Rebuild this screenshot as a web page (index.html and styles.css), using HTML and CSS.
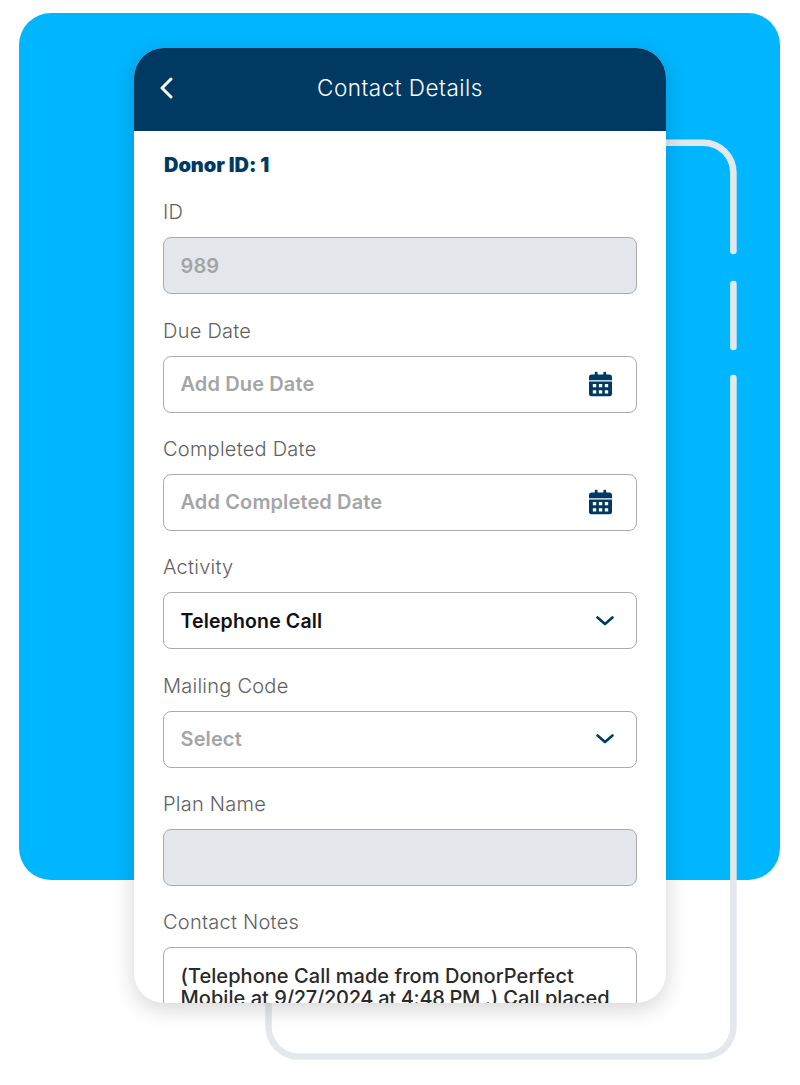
FILE: index.html
```html
<!DOCTYPE html>
<html lang="en">
<head>
<meta charset="utf-8">
<title>Contact Details</title>
<link rel="stylesheet" href="styles.css">
</head>
<body>
<div class="stage">
  <div class="panel"></div>
  <svg class="trace" width="800" height="1085" viewBox="0 0 800 1085" fill="none" aria-hidden="true">
    <path d="M640 142.7H703.4A30 30 0 0 1 733.4 172.7V251"/>
    <path d="M733.4 284V347"/>
    <path d="M733.4 378V1026.5A30 30 0 0 1 703.4 1056.5H298.5A30 30 0 0 1 268.5 1026.5V980"/>
  </svg>
  <main class="phone">
    <header class="bar">
      <svg class="back" width="14" height="22" viewBox="0 0 14 22" fill="none"><path d="M12 2L3 11l9 9"/></svg>
      <h1 class="title">Contact Details</h1>
    </header>
    <section class="form">
      <h2 class="donor">Donor ID: 1</h2>
      <div class="group">
        <label class="label">ID</label>
        <div class="field disabled"><span class="muted">989</span></div>
      </div>
      <div class="group">
        <label class="label">Due Date</label>
        <div class="field"><span class="muted">Add Due Date</span>
          <svg class="cal" width="23" height="26" viewBox="0 0 24 26"><use href="#cal"/></svg>
        </div>
      </div>
      <div class="group">
        <label class="label">Completed Date</label>
        <div class="field"><span class="muted">Add Completed Date</span>
          <svg class="cal" width="23" height="26" viewBox="0 0 24 26"><use href="#cal"/></svg>
        </div>
      </div>
      <div class="group">
        <label class="label">Activity</label>
        <div class="field select"><span class="value">Telephone Call</span>
          <svg class="chev" width="18" height="10" viewBox="0 0 18 10" fill="none"><path d="M1.500 1.500L9 8l7.500-6.500"/></svg>
        </div>
      </div>
      <div class="group">
        <label class="label">Mailing Code</label>
        <div class="field select"><span class="muted">Select</span>
          <svg class="chev" width="18" height="10" viewBox="0 0 18 10" fill="none"><path d="M1.500 1.500L9 8l7.500-6.500"/></svg>
        </div>
      </div>
      <div class="group">
        <label class="label">Plan Name</label>
        <div class="field disabled"></div>
      </div>
      <div class="group">
        <label class="label">Contact Notes</label>
        <div class="notes">(Telephone Call made from DonorPerfect Mobile at <span class="tight">9/27/2024 at 4:48 PM .)</span> Call placed</div>
      </div>
    </section>
  </main>
  <svg class="defs" width="0" height="0" aria-hidden="true">
    <symbol id="cal" viewBox="0 0 24 26">
      <path fill="#003a63" fill-rule="evenodd" d="M6 1.500a1.500 1.500 0 0 1 3 0V3h6V1.500a1.500 1.500 0 0 1 3 0V3h3a3 3 0 0 1 3 3v3H0V6a3 3 0 0 1 3-3h3zM0 10.500h24V23a3 3 0 0 1-3 3H3a3 3 0 0 1-3-3zM4 13v3.500h3.500V13zm6.300 0v3.500h3.500V13zm6.200 0v3.500H20V13zM4 19.500V23h3.500v-3.500zm6.300 0V23h3.500v-3.500zm6.200 0V23H20v-3.500z"/>
    </symbol>
  </svg>
</div>
</body>
</html>
```

FILE: styles.css
```css
* { box-sizing: border-box; }
html, body { margin: 0; background: #fff; }
.stage {
  position: relative;
  width: 800px;
  height: 1085px;
  padding: 48px 134px 82px;
  overflow: hidden;
  font-family: Inter, "Liberation Sans", sans-serif;
}
.panel {
  position: absolute;
  left: 19px;
  top: 13px;
  width: 761px;
  height: 867px;
  border-radius: 32px;
  background: #00b6ff;
}
.trace {
  position: absolute;
  left: 0;
  top: 0;
}
.trace path {
  stroke: #e3e8ed;
  stroke-width: 6.6;
  stroke-linecap: round;
}
.defs { position: absolute; }
.phone {
  position: relative;
  height: 955px;
  border-radius: 30px;
  background: #fff;
  overflow: hidden;
}
.stage::after {
  content: "";
  position: absolute;
  left: 134px;
  top: 48px;
  width: 532px;
  height: 955px;
  border-radius: 30px;
  box-shadow: 0 6px 22px rgba(0, 0, 0, .17);
  pointer-events: none;
}
.bar {
  display: flex;
  align-items: center;
  justify-content: center;
  position: relative;
  height: 83px;
  padding-bottom: 4px;
  background: #003a63;
}
.back {
  position: absolute;
  left: 25px;
  top: 29px;
}
.back path {
  stroke: #fff;
  stroke-width: 3;
  stroke-linecap: round;
  stroke-linejoin: round;
}
.title {
  margin: 0;
  color: #fff;
  font-size: 22.500px;
  font-weight: 300;
  letter-spacing: .5px;
}
.form {
  display: flex;
  flex-direction: column;
  gap: 23.330px;
  padding: 22px 29px 0;
}
.donor {
  margin: 0 0 -1px 1px;
  color: #003a63;
  font-size: 20px;
  font-weight: 900;
  line-height: 24px;
  letter-spacing: -.05px;
}
.group {
  display: flex;
  flex-direction: column;
  gap: 11px;
}
.label {
  color: #616161;
  font-size: 20px;
  font-weight: 300;
  line-height: 27px;
  letter-spacing: .25px;
}
.field {
  display: flex;
  align-items: center;
  justify-content: space-between;
  height: 57px;
  padding: 0 24px 0 16.500px;
  border: 1.500px solid #a9abac;
  border-radius: 8px;
  font-size: 19.500px;
}
.select { padding-right: 22px; }
.disabled { background: #e4e8ec; }
.muted { color: #a3a5a6; font-size: 20px; font-weight: 600; letter-spacing: .12px; }
.value { color: #111; font-weight: 600; letter-spacing: .15px; }
.cal { display: block; }
.chev path {
  stroke: #003a63;
  stroke-width: 2.600;
  stroke-linecap: round;
  stroke-linejoin: round;
}
.notes {
  height: 120px;
  padding: 17px 8px 0 16.500px;
  border: 1.500px solid #a9abac;
  border-radius: 8px;
  color: #2a2a2a;
  font-size: 20px;
  font-weight: 500;
  line-height: 22px;
  letter-spacing: .05px;
}
.tight { letter-spacing: -.3px; }
```
